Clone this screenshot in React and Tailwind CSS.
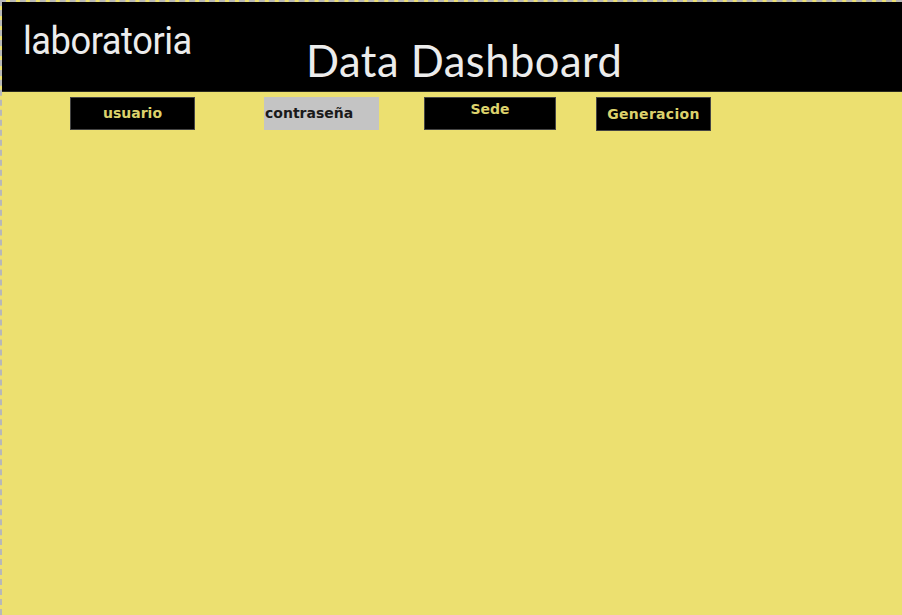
export default function App() {
  return (
    <div className="w-[902px] h-[615px] bg-[#ece070] border-l-2 border-t-2 border-dashed border-[#b8b8b8] overflow-hidden flex flex-col">
      <header className="h-[90px] bg-black relative shrink-0 border-b border-[#2a2a20]">
        <div className="pl-[21px] pt-[20px]">
          <span className="inline-block text-[39px] leading-none text-[#ececec] font-['Roboto',sans-serif] tracking-[-0.5px] scale-x-[0.93] origin-left">
            laboratoria
          </span>
        </div>
        <div className="absolute left-[304px] top-[37px] text-[43.5px] leading-none text-[#ececec] font-['Lato','Open_Sans',sans-serif] tracking-[0.5px]">
          Data Dashboard
        </div>
      </header>
      <div className="flex items-start pt-[5px] font-['DejaVu_Sans',sans-serif] text-[14px] font-bold">
        <div className="ml-[68px] w-[125px] h-[33px] bg-black border border-[#444] flex items-center justify-center text-[#dcd26c]">
          usuario
        </div>
        <div className="ml-[69px] w-[115px] h-[33px] bg-[#c4c4c4] flex items-center pl-[1px] text-[#1a1a1a]">
          contraseña
        </div>
        <div className="ml-[45px] w-[132px] h-[33px] bg-black border border-[#444] flex justify-center pt-[1px] text-[#dcd26c]">
          Sede
        </div>
        <div className="ml-[40px] w-[115px] h-[34px] bg-black border border-[#444] flex items-center justify-center text-[#dcd26c] tracking-[0.3px]">
          Generacion
        </div>
      </div>
    </div>
  );
}
